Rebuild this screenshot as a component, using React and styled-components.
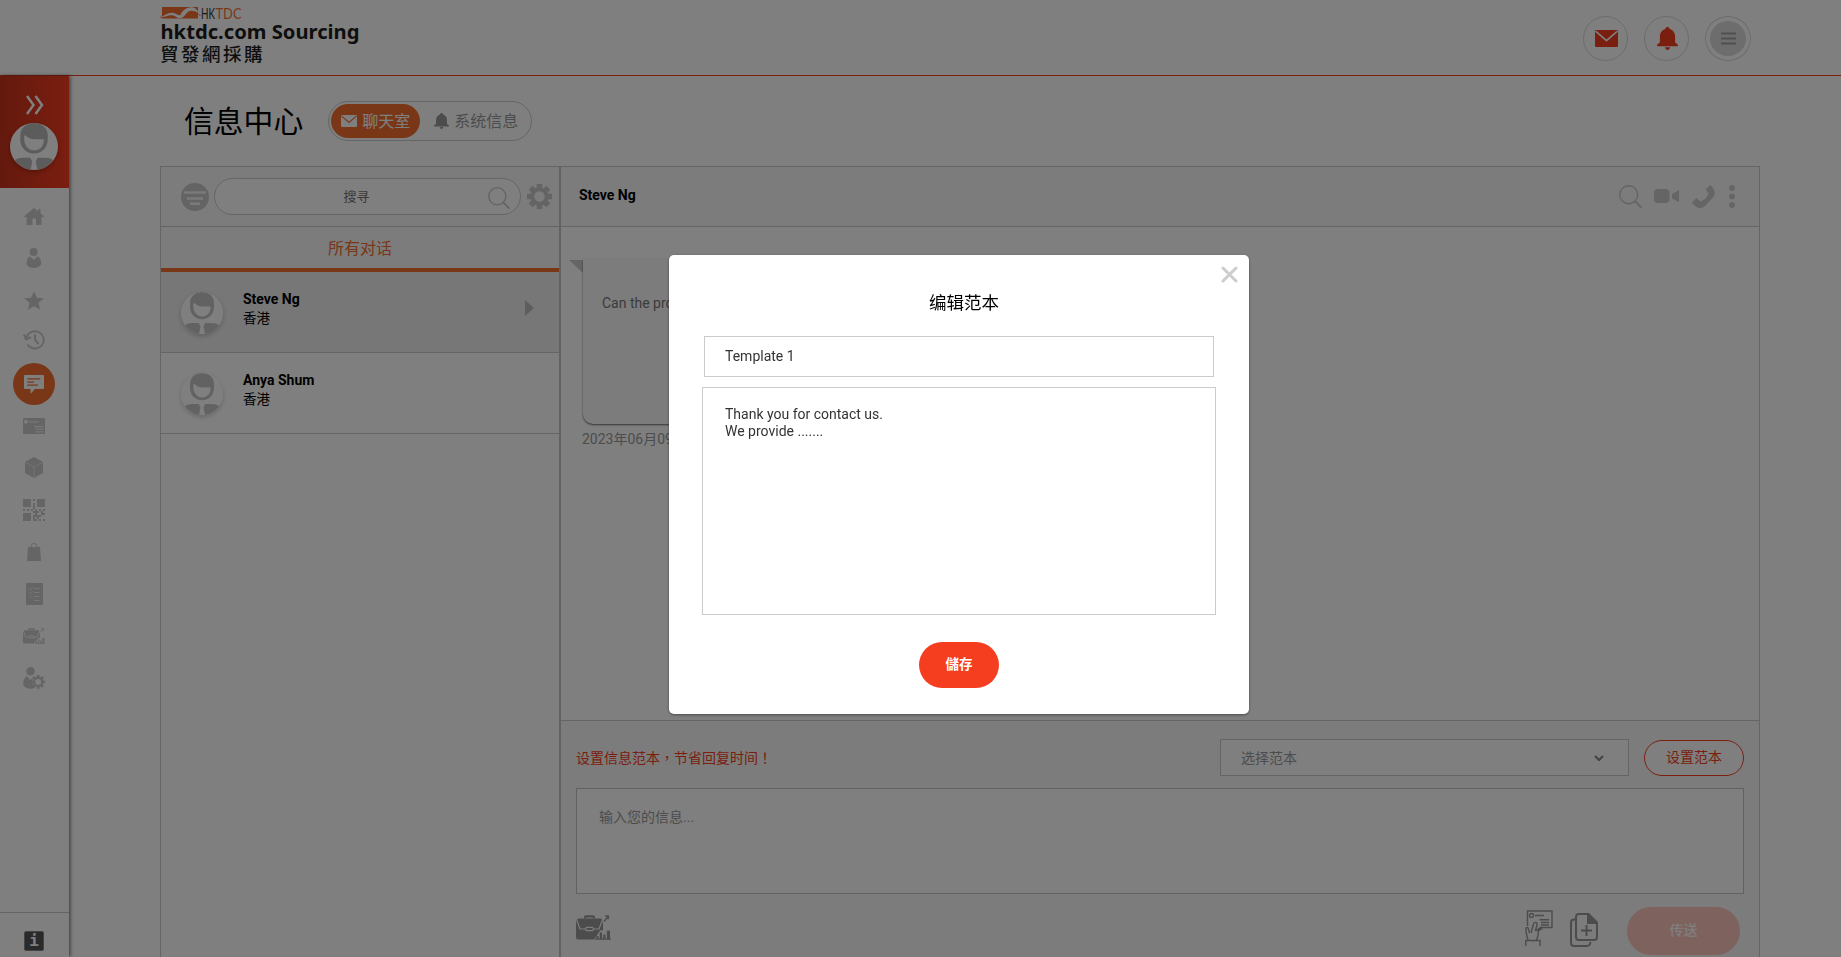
import React from 'react';
import styled, { createGlobalStyle } from 'styled-components';

const COLOR = {
  RED: '#f53d20',
  ORANGE: '#f26f31',
  BORDER: '#cbcbcb',
  ICON: '#cbcbcb',
  PANEL: '#f8f8f8',
  WHITE: '#fff',
};

const GlobalStyle = createGlobalStyle`
  * {
    box-sizing: border-box;
  }
  body {
    margin: 0;
    overflow: hidden;
    background: #fff;
    color: #000;
    font-family: Roboto, 'Noto Sans CJK SC', sans-serif;
    font-size: 14px;
  }
  svg {
    display: block;
    flex: none;
  }
  input, textarea, button {
    font-family: inherit;
    font-size: 14px;
  }
`;

const SearchIcon = ({ size = 22 }) => (
  <svg width={size} height={size} viewBox="0 0 22 22" fill="none" stroke="#c6c6c6">
    <circle cx="9.3" cy="9.3" r="8.6" strokeWidth="1.3" />
    <path d="M15.3 15.3L21.3 21.6" strokeWidth="1.8" />
  </svg>
);

const GearIcon = ({ size = 25, hole = 5.2 }) => (
  <svg width={size} height={size} viewBox="0 0 25 25" fill="none" stroke="currentColor">
    <circle cx="12.5" cy="12.5" r={hole + 2} strokeWidth="4" />
    {[0, 45, 90, 135].map((deg) => (
      <path
        key={deg}
        d="M12.5 0V4.4M12.5 20.6V25"
        strokeWidth="5.6"
        transform={`rotate(${deg} 12.5 12.5)`}
      />
    ))}
  </svg>
);

const EnvelopeIcon = ({ width, height, line }) => (
  <svg width={width} height={height} viewBox="0 0 23 17" preserveAspectRatio="none">
    <rect width="23" height="17" rx="1" fill="currentColor" />
    <path d="M0.6 1.2L11.5 10.6L22.4 1.2" fill="none" stroke={line} strokeWidth="1.6" />
  </svg>
);

const BellIcon = ({ width, height }) => (
  <svg width={width} height={height} viewBox="0 0 22 23" preserveAspectRatio="none" fill="currentColor">
    <path d="M11 0c1.4 0 2.2.8 2.3 2C17 3 19 6 19 9.500V15.600L21.400 17.200C22.300 18 22 19.300 20.800 19.300H1.200C0 19.300-.3 18 .6 17.200L3 15.600V9.500C3 6 5 3 8.700 2 8.800.8 9.600 0 11 0Z" />
    <path d="M8.300 20.300H13.700C13.200 22 12.300 23 11 23S8.800 22 8.300 20.300Z" />
  </svg>
);

const BriefcaseIcon = ({ width, height, line }) => (
  <svg width={width} height={height} viewBox="0 0 35 25" fill="currentColor">
    <path d="M8 3.500V2.300Q8 .3 10 .3H17Q19 .3 19 2.300V3.500H16.800V2.600H10.200V3.500Z" />
    <path d="M2 3.500H25.500L27 8V15L20 22 18 24.500H2Q0 24.500 0 22.500V6Z" />
    <path d="M.8 5L4 14H10M17 14H23L26.400 5" fill="none" stroke={line} strokeWidth="1.2" />
    <rect x="9.800" y="12.300" width="7.400" height="3.400" rx="1" fill="none" stroke={line} strokeWidth="1.2" />
    <path d="M18 25L24 15.500H36V25Z" fill={line} />
    <path d="M19 23.500H35V24.700H19ZM20.500 21H22.500V24H20.500ZM23.700 17.500H26V24H23.700ZM27.200 19.500H29.500V24H27.200ZM30.900 15.800H34V24H30.900Z" />
    <path d="M28 6.500L31.500 2.300M29 .900H32.300V4.300" fill="none" stroke="currentColor" strokeWidth="1.500" />
  </svg>
);

const AvatarIcon = ({ width = 42, height = 42, line = '#c5c5c5' }) => (
  <svg width={width} height={height} viewBox="0 0 42 42" preserveAspectRatio="none">
    <defs>
      <clipPath id="avatarClip">
        <circle cx="21" cy="21" r="21" />
      </clipPath>
    </defs>
    <g clipPath="url(#avatarClip)">
      <rect width="42" height="42" fill="#fff" />
      <path d="M21 0C28 0 33 4.500 33 11V15C33 22 28 27.300 21 27.300S9 22 9 15V11C9 4.500 14 0 21 0Z" fill={line} />
      <path d="M13.500 11C15.500 13.500 18.500 14.500 22 14.500H29.500C30 20 26.500 24.500 21 24.500C15.500 24.500 11.500 19 12.500 11.500Z" fill="#fff" />
      <path d="M4 33Q7 31 11 31H17.800L19.500 34.500 18 42H4ZM38 33Q35 31 31 31H24.200L22.500 34.500 24 42H38Z" fill={line} />
    </g>
  </svg>
);

const gray = { fill: COLOR.ICON };

const MENU_ITEMS = [
  {
    name: 'home',
    icon: (
      <svg width="20" height="17" viewBox="0 0 20 17" {...gray}>
        <path d="M10 0L14 3.200V1H16.500V5.200L20 8.300 19 9.300H17.500V17H12V10.500H8.500V17H2.700V9.300H1L0 8.300Z" />
      </svg>
    ),
  },
  {
    name: 'user',
    icon: (
      <svg width="16" height="20" viewBox="0 0 16 20" {...gray}>
        <circle cx="7.700" cy="4" r="4" />
        <path d="M3.600 8.300L7.800 11.800 12 8.300C14.500 10.500 15.500 13 15.200 16.500C13.500 19 11 20 8 20S1.800 19 .6 16.500C.3 13 1.300 10.500 3.600 8.300Z" />
      </svg>
    ),
  },
  {
    name: 'star',
    icon: (
      <svg width="20" height="19" viewBox="0 0 20 19" {...gray}>
        <path d="M10 0L12.800 6.700 20 7.300 14.500 11.800 16.200 18.800 10 15.200 3.800 18.800 5.500 11.800 0 7.300 7.200 6.700Z" />
      </svg>
    ),
  },
  {
    name: 'history',
    lift: 4,
    icon: (
      <svg width="22" height="20" viewBox="0 0 22 20" fill="none" stroke={COLOR.ICON}>
        <path d="M3.500 7.500A8.800 8.600 0 1 1 4.500 14.500" strokeWidth="1.900" />
        <path d="M1 4.500L3 9.300 8 7.300" strokeWidth="2.300" />
        <path d="M12 4.500V10L15.700 14" strokeWidth="2" />
      </svg>
    ),
  },
  {
    name: 'chat',
    active: true,
    icon: (
      <svg width="20" height="19" viewBox="0 0 20 19">
        <path d="M1 0H19Q20 0 20 1V13Q20 14 19 14H11L6.500 18.800V14H1Q0 14 0 13V1Q0 0 1 0Z" fill="#fff" />
        <path d="M3.300 3.900H16.300M3.300 7.100H10M3.300 10.200H14" stroke={COLOR.ORANGE} strokeWidth="1.200" />
      </svg>
    ),
  },
  {
    name: 'card',
    icon: (
      <svg width="22" height="16" viewBox="0 0 22 16">
        <rect width="22" height="16" rx="1" fill={COLOR.ICON} />
        <circle cx="3" cy="3.800" r="1.900" fill="#fff" />
        <path d="M6 3.800H16M11 8.600H20.500M12.500 11.200H20.500M12.500 13.800H20.500" stroke="#eee" strokeWidth="1.200" />
      </svg>
    ),
  },
  {
    name: 'box',
    lift: 1,
    icon: (
      <svg width="18" height="21" viewBox="0 0 18 21">
        <path d="M9 0L18 5V16L9 21 0 16V5Z" fill={COLOR.ICON} />
        <path d="M.5 5.300L9 10.200 17.500 5.300M9 10.200V20.500" fill="none" stroke="#eee" strokeWidth="0.800" />
      </svg>
    ),
  },
  {
    name: 'qrcode',
    icon: (
      <svg width="22" height="22" viewBox="0 0 22 22" {...gray}>
        <path d="M0 0H8V8H0ZM14 0H22V8H14ZM0 14H8V22H0Z" />
        <path d="M10 0H12V2H10ZM10 4H12V10H10ZM0 10H2V12H0ZM4 10H6V12H4ZM8 10H10V12H8ZM12 10H14V12H12ZM16 10H18V12H16ZM20 10H22V12H20ZM10 12H16V14H10ZM18 12H20V16H18ZM12 14H14V18H10V16H12ZM14 16H18V18H14ZM20 14H22V16H20ZM10 18H12V22H10ZM14 18H16V20H14ZM16 20H18V22H16ZM20 20H22V22H20ZM12 20H14V22H12Z" />
      </svg>
    ),
  },
  {
    name: 'bag',
    icon: (
      <svg width="14" height="18" viewBox="0 0 14 18">
        <path d="M1 4H13L14 18H0Z" fill={COLOR.ICON} />
        <path d="M4.300 5V3A2.700 2.600 0 0 1 9.700 3V5" fill="none" stroke={COLOR.ICON} strokeWidth="0.900" />
      </svg>
    ),
  },
  {
    name: 'list',
    icon: (
      <svg width="17" height="22" viewBox="0 0 17 22">
        <rect width="17" height="22" fill={COLOR.ICON} />
        <path
          d="M8 5.500H13.500M8 9.500H13.500M8 13.500H13.500M8 17.500H13.500M3 5.500L4.300 6.800 6.500 4M3 9.400L4.300 10.700 6.500 8M3 13.300L4.300 14.600 6.500 12"
          fill="none"
          stroke="#eee"
          strokeWidth="1"
        />
      </svg>
    ),
  },
  { name: 'business', icon: <BriefcaseIcon width={22} height={16} line="#fff" /> },
  {
    name: 'account',
    icon: (
      <svg width="22" height="22" viewBox="0 0 22 22" fill={COLOR.ICON}>
        <circle cx="7.500" cy="4.300" r="4.200" />
        <path d="M3.600 9L7.500 13 10.500 9.500 9 14 10 18 12 21C8 22.500 3 22 .6 18.500C-.3 15 1 11 3.600 9Z" />
        <g transform="translate(8.300 8) scale(.55)" fill="none" stroke={COLOR.ICON}>
          <circle cx="12.500" cy="12.500" r="7.300" strokeWidth="3.800" />
          {[0, 45, 90, 135].map((deg) => (
            <path key={deg} d="M12.500 0V4.400M12.500 20.600V25" strokeWidth="5" transform={`rotate(${deg} 12.500 12.500)`} />
          ))}
        </g>
      </svg>
    ),
  },
];

const CONTACTS = [
  { name: 'Steve Ng', place: '香港', selected: true },
  { name: 'Anya Shum', place: '香港', selected: false },
];

const Logo = () => (
  <svg width="206" height="75" viewBox="0 0 206 75">
    <rect x="2" y="7" width="36" height="11.500" fill={COLOR.ORANGE} />
    <path d="M-1 16.500L2 17.300M38 13.500L40.500 16" stroke={COLOR.ORANGE} />
    <path d="M0 16.500C4 16.800 7 12.800 12 12.800C15 12.800 17 15 20 15.500C22 11 26 7.200 31 7.200C35 7.200 37.500 9.500 38.500 13C36 11.500 34 10.800 31 10.800C26 10.800 25 18.500 20 18.200C16 18 15 15 11 15.300C7 15.500 5 17.500 0 17Z" fill="#fff" />
    <text x="41" y="18.500" fill="#333" fontFamily="Lato, sans-serif" fontSize="16" textLength="14" lengthAdjust="spacingAndGlyphs">
      HK
    </text>
    <text x="55.500" y="18.500" fill={COLOR.ORANGE} fontFamily="Lato, sans-serif" fontSize="16" textLength="26" lengthAdjust="spacingAndGlyphs">
      TDC
    </text>
    <text x="0.500" y="38.500" fill="#1c1c1c" fontFamily="'Noto Sans', sans-serif" fontWeight="700" fontSize="19.500" textLength="199" lengthAdjust="spacingAndGlyphs">
      hktdc.com Sourcing
    </text>
    <text x="0" y="60.500" fill="#1c1c1c" fontFamily="'Noto Sans CJK TC', sans-serif" fontWeight="500" fontSize="18.500" letterSpacing="2.500">
      貿發網採購
    </text>
  </svg>
);

const TemplateModal = () => (
  <Overlay>
    <Modal>
      <CloseButton aria-label="close">
        <svg width="17" height="17" viewBox="0 0 17 17" fill="none" stroke="#cdcdcd" strokeWidth="3" strokeLinecap="round">
          <path d="M2 2L15 15M15 2L2 15" />
        </svg>
      </CloseButton>
      <ModalTitle>编辑范本</ModalTitle>
      <TemplateName defaultValue="Template 1" />
      <TemplateBody spellCheck={false} defaultValue={'Thank you for contact us.\nWe provide .......'} />
      <SaveButton>儲存</SaveButton>
    </Modal>
  </Overlay>
);

const App = () => {
  return (
    <>
      <GlobalStyle />
      <Page>
        <Header>
          <Logo />
          <HeaderActions>
            <RoundButton>
              <EnvelopeIcon width={23} height={17} line="#fff" />
            </RoundButton>
            <RoundButton>
              <BellIcon width={21} height={23} />
            </RoundButton>
            <RoundButton $wide>
              <MenuCircle>
                <svg width="15" height="13" viewBox="0 0 15 13" stroke="#a0a0a0" strokeWidth="1.800">
                  <path d="M0 1.500H15M0 6.500H15M0 11.500H15" />
                </svg>
              </MenuCircle>
            </RoundButton>
          </HeaderActions>
        </Header>
        <Body>
          <SideBar>
            <Profile>
              <svg width="18" height="20" viewBox="0 0 18 20" fill="none" stroke="#fff" strokeWidth="2.500">
                <path d="M1 1L7.500 10 1 19M9.500 1L16 10 9.500 19" />
              </svg>
              <ProfilePhoto>
                <AvatarIcon width={48} height={47} line="#b9b9b9" />
              </ProfilePhoto>
            </Profile>
            <MenuList>
              {MENU_ITEMS.map(({ name, icon, active, lift = 0 }) => (
                <MenuItem key={name} $active={active} $lift={lift}>
                  {icon}
                </MenuItem>
              ))}
            </MenuList>
            <SideFooter>
              <InfoBadge>i</InfoBadge>
            </SideFooter>
          </SideBar>
          <Content>
            <TitleRow>
              <Title>信息中心</Title>
              <Switch>
                <SwitchItem $active>
                  <EnvelopeIcon width={16} height={12} line={COLOR.ORANGE} />
                  聊天室
                </SwitchItem>
                <SwitchItem>
                  <BellIcon width={15} height={16} />
                  系统信息
                </SwitchItem>
              </Switch>
            </TitleRow>
            <Messenger>
              <ContactPanel>
                <SearchRow>
                  <svg width="28" height="28" viewBox="0 0 28 28">
                    <circle cx="14" cy="14" r="14" fill="#c8c8c8" />
                    <path d="M3 9.500H25M5.800 15.500H22M9 20.700H19" stroke="#f4f4f4" strokeWidth="2.500" />
                  </svg>
                  <SearchBox>
                    <SearchText>搜寻</SearchText>
                    <SearchIcon />
                  </SearchBox>
                  <Gear>
                    <GearIcon />
                  </Gear>
                </SearchRow>
                <Tab>所有对话</Tab>
                {CONTACTS.map(({ name, place, selected }) => (
                  <Contact key={name} $selected={selected}>
                    <Photo>
                      <AvatarIcon />
                    </Photo>
                    <ContactText>
                      <Name>{name}</Name>
                      <Place>{place}</Place>
                    </ContactText>
                    {selected && (
                      <Arrow width="9" height="16" viewBox="0 0 9 16">
                        <path d="M0 0L9 8L0 16Z" />
                      </Arrow>
                    )}
                  </Contact>
                ))}
              </ContactPanel>
              <ChatPanel>
                <ChatHeader>
                  <Name>Steve Ng</Name>
                  <ChatTools>
                    <SearchIcon size={23} />
                    <svg width="26" height="14" viewBox="0 0 26 14" {...gray}>
                      <rect width="15.500" height="14" rx="4" />
                      <path d="M18 5L25 1V13L18 9.500Z" />
                    </svg>
                    <svg width="23" height="23" viewBox="0 0 23 23" {...gray}>
                      <path d="M18.300 0L13.500 4.500 16.500 8.500C15.500 12 12 15.500 8.300 16.500L4.500 13 0 17.500C2 21 5 23 8.500 23C11 22.800 12 22 13.500 20.500L21 12.500C24 9 23 4 18.300 0Z" />
                    </svg>
                    <svg width="6" height="23" viewBox="0 0 6 23" {...gray}>
                      <circle cx="3" cy="3" r="3" />
                      <circle cx="3" cy="11.500" r="3" />
                      <circle cx="3" cy="20" r="3" />
                    </svg>
                  </ChatTools>
                </ChatHeader>
                <Conversation>
                  <BubbleRow>
                    <svg width="14" height="13" viewBox="0 0 14 13" fill="#cbcbcb">
                      <path d="M0 0H14V13Z" />
                    </svg>
                    <Bubble>Can the product</Bubble>
                  </BubbleRow>
                  <SentDate>2023年06月09</SentDate>
                </Conversation>
                <Composer>
                  <TemplateRow>
                    <Hint>设置信息范本，节省回复时间！</Hint>
                    <Select>
                      选择范本
                      <svg width="10" height="7" viewBox="0 0 10 7" fill="none" stroke="#888" strokeWidth="2.200">
                        <path d="M1 1L5 5L9 1" />
                      </svg>
                    </Select>
                    <OutlineButton>设置范本</OutlineButton>
                  </TemplateRow>
                  <MessageInput placeholder="输入您的信息..." />
                  <SendRow>
                    <Attach>
                      <BriefcaseIcon width={35} height={25} line={COLOR.PANEL} />
                    </Attach>
                    <svg width="28" height="36" viewBox="0 0 28 36" fill="none" stroke="#999" strokeWidth="1.400">
                      <path d="M2.500 16V1H27V17.500H15" />
                      <circle cx="6.500" cy="5.500" r="2" />
                      <path d="M10 5.500H19M14.500 9.800H24M16 12.500H24M16 15H24" />
                      <path d="M3 30C1.800 26 .8 22 1 18.500C1 17 3 17 3.300 18.500L4.500 23M6 23L8.500 14C9.500 11.500 12.500 12 12 15L10.500 20.500L13.500 20C13.500 24 13 27 11.500 30" />
                      <path d="M.8 36V30.500H15V36" />
                      <path d="M13 20L17 17.800" strokeWidth="3" />
                    </svg>
                    <svg width="28" height="34" viewBox="0 0 28 34" fill="none" stroke="#999" strokeWidth="2">
                      <path d="M5.500 6.500H4Q1 6.500 1 9.500V30Q1 33 4 33H17Q20 33 20.500 29" />
                      <path d="M9 1H18.500L27 9.500V24Q27 27 24 27H9Q6 27 6 24V4Q6 1 9 1Z" />
                      <path d="M17 1H19L27 9.500V11H17Z" fill="#999" stroke="none" />
                      <path d="M16.500 12V23M11 17.500H22" />
                    </svg>
                    <SendButton>传送</SendButton>
                  </SendRow>
                </Composer>
              </ChatPanel>
            </Messenger>
          </Content>
        </Body>
      </Page>
      <TemplateModal />
    </>
  );
};

const Page = styled.div`
  display: flex;
  flex-direction: column;
  height: 957px;
  overflow: hidden;
`;
const Header = styled.header`
  display: flex;
  flex: none;
  justify-content: space-between;
  height: 76px;
  padding: 0 90px 0 160px;
  border-bottom: 1px solid ${COLOR.RED};
`;
const HeaderActions = styled.div`
  display: flex;
  gap: 16px;
  padding-top: 16px;
  color: ${COLOR.RED};
`;
const RoundButton = styled.div`
  display: flex;
  align-items: center;
  justify-content: center;
  width: ${({ $wide }) => ($wide ? 46 : 45)}px;
  height: 45px;
  padding-left: ${({ $wide }) => ($wide ? 0 : 2)}px;
  border: 1px solid #d8d8d8;
  border-radius: 50%;
`;
const MenuCircle = styled.div`
  display: flex;
  align-items: center;
  justify-content: center;
  width: 36px;
  height: 35px;
  border-radius: 50%;
  background: #dadada;
`;
const Body = styled.div`
  display: flex;
  flex: 1;
  min-height: 0;
`;
const SideBar = styled.nav`
  display: flex;
  flex: none;
  flex-direction: column;
  width: 69px;
  box-shadow: 1px 0 4px rgba(0, 0, 0, 0.6);
`;
const Profile = styled.div`
  display: flex;
  flex: none;
  flex-direction: column;
  align-items: center;
  gap: 8px;
  height: 112px;
  padding-top: 19px;
  background: linear-gradient(90deg, #c9331c, #f53d20);
`;
const ProfilePhoto = styled.div`
  margin-right: 1px;
  border-radius: 50%;
  box-shadow: 0 2px 5px rgba(0, 0, 0, 0.25);
`;
const MenuList = styled.div`
  display: flex;
  flex: 1;
  flex-direction: column;
  align-items: center;
  padding: 7px 1px 0 0;
  color: ${COLOR.ICON};
`;
const MenuItem = styled.div`
  display: flex;
  align-items: center;
  justify-content: center;
  width: 42px;
  height: 42px;
  padding-bottom: ${({ $lift }) => $lift}px;
  border-radius: 50%;
  background: ${({ $active }) => ($active ? COLOR.ORANGE : 'transparent')};
`;
const SideFooter = styled.div`
  display: flex;
  justify-content: center;
  height: 45px;
  padding: 18px 1px 0 0;
  border-top: 1px solid ${COLOR.BORDER};
`;
const InfoBadge = styled.div`
  width: 20px;
  height: 20px;
  border: 1px solid #888;
  border-radius: 2px;
  background: #555;
  color: #fff;
  font: 700 16px/18px 'DejaVu Sans Mono', monospace;
  text-align: center;
`;
const Content = styled.main`
  display: flex;
  flex: 1;
  flex-direction: column;
  padding: 0 81px 0 91px;
`;
const TitleRow = styled.div`
  display: flex;
  flex: none;
  align-items: center;
  gap: 25px;
  height: 90px;
  padding-left: 24px;
`;
const Title = styled.h1`
  margin: 0;
  padding-top: 2px;
  font-size: 29.8px;
  font-weight: 400;
  line-height: 40px;
`;
const Switch = styled.div`
  display: flex;
  width: 204px;
  height: 40px;
  padding: 2px;
  border: 1px solid ${COLOR.BORDER};
  border-radius: 20px;
`;
const SwitchItem = styled.div`
  display: flex;
  align-items: center;
  gap: 5px;
  height: 34px;
  padding: ${({ $active }) => ($active ? '0 10px 2px' : '0 14px 2px')};
  border-radius: 17px;
  background: ${({ $active }) => ($active ? COLOR.ORANGE : 'transparent')};
  color: ${({ $active }) => ($active ? COLOR.WHITE : '#999')};
  font-size: 16px;
  white-space: nowrap;

  svg {
    margin-top: 2px;
  }
`;
const Messenger = styled.section`
  display: flex;
  flex: 1;
  min-height: 0;
  border: 1px solid ${COLOR.BORDER};
  border-bottom: 0;
`;
const ContactPanel = styled.div`
  flex: none;
  width: 400px;
  border-right: 2px solid #c4c4c4;
`;
const SearchRow = styled.div`
  display: flex;
  align-items: center;
  height: 60px;
  padding-left: 20px;
  border-bottom: 1px solid ${COLOR.BORDER};
  background: ${COLOR.PANEL};
`;
const SearchBox = styled.div`
  display: flex;
  align-items: center;
  width: 307px;
  height: 37px;
  margin: 0 6px 0 5px;
  padding: 2px 10px 0 0;
  border: 1px solid ${COLOR.BORDER};
  border-radius: 19px;
  background: ${COLOR.WHITE};
`;
const SearchText = styled.div`
  flex: 1;
  padding: 0 0 4px 10px;
  color: #757575;
  font-size: 13px;
  text-align: center;
`;
const Gear = styled.div`
  color: #c8c8c8;
`;
const Tab = styled.div`
  height: 45px;
  border-bottom: 4px solid ${COLOR.ORANGE};
  background: ${COLOR.PANEL};
  color: ${COLOR.ORANGE};
  font-size: 16px;
  line-height: 43px;
  text-align: center;
`;
const Contact = styled.div`
  display: flex;
  align-items: center;
  height: 81px;
  padding: 0 25px 0 20px;
  border-bottom: 1px solid ${COLOR.BORDER};
  background: ${({ $selected }) => ($selected ? '#eee' : COLOR.WHITE)};
`;
const Photo = styled.div`
  margin-top: 2px;
  border-radius: 50%;
  box-shadow: 0 2px 5px rgba(0, 0, 0, 0.2);
`;
const ContactText = styled.div`
  flex: 1;
  padding: 0 0 7px 20px;
`;
const Arrow = styled.svg`
  margin-bottom: 8px;
  fill: #bdbdbd;
`;
const Name = styled.div`
  font-size: 14px;
  font-weight: 700;
  line-height: 19px;
`;
const Place = styled.div`
  font-size: 13.5px;
  line-height: 19px;
`;
const ChatPanel = styled.div`
  display: flex;
  flex: 1;
  flex-direction: column;
`;
const ChatHeader = styled.div`
  display: flex;
  align-items: center;
  justify-content: space-between;
  height: 60px;
  padding: 0 24px 2px 18px;
  border-bottom: 1px solid ${COLOR.BORDER};
  background: ${COLOR.PANEL};
`;
const ChatTools = styled.div`
  display: flex;
  align-items: center;
  gap: 12px;
  padding-top: 1px;

  svg:last-child {
    margin-left: 2px;
  }
`;
const Conversation = styled.div`
  height: 493px;
  padding: 32px 8px 0;
`;
const BubbleRow = styled.div`
  display: flex;

  svg {
    margin-top: 1px;
  }
`;
const Bubble = styled.div`
  width: 400px;
  height: 165px;
  padding: 35px 19px;
  border-radius: 0 0 10px 10px;
  background: ${COLOR.PANEL};
  box-shadow: 0 1px 2px rgba(0, 0, 0, 0.6);
  color: #777;
  line-height: 18px;
`;
const SentDate = styled.div`
  padding: 5px 13px;
  color: #999;
  line-height: 20px;
`;
const Composer = styled.div`
  flex: 1;
  padding: 18px 15px 0;
  border-top: 1px solid ${COLOR.BORDER};
  background: ${COLOR.PANEL};
`;
const TemplateRow = styled.div`
  display: flex;
  align-items: center;
  height: 37px;
`;
const Hint = styled.div`
  flex: 1;
  padding-bottom: 2px;
  color: ${COLOR.RED};
  font-family: Roboto, 'Noto Sans CJK TC', sans-serif;
`;
const Select = styled.div`
  display: flex;
  align-items: center;
  justify-content: space-between;
  width: 409px;
  height: 37px;
  margin-right: 15px;
  padding: 0 24px 2px 20px;
  border: 1px solid ${COLOR.BORDER};
  background: ${COLOR.WHITE};
  color: #999;

  svg {
    margin-top: 4px;
  }
`;
const OutlineButton = styled.button`
  width: 100px;
  height: 36px;
  margin-top: 1px;
  padding: 0 0 4px;
  border: 1px solid ${COLOR.RED};
  border-radius: 18px;
  background: ${COLOR.WHITE};
  color: ${COLOR.RED};
  font-weight: 400;
`;
const MessageInput = styled.textarea`
  display: block;
  width: 1168px;
  height: 106px;
  margin-top: 12px;
  padding: 18px 22px;
  border: 1px solid #c4c4c4;
  background: ${COLOR.WHITE};
  line-height: 20px;
  resize: none;

  &::placeholder {
    color: #999;
  }
`;
const SendRow = styled.div`
  display: flex;
  align-items: center;
  height: 49px;
  margin-top: 12px;
  padding-right: 4px;
  gap: 17px;

  svg:nth-child(2) {
    margin-bottom: 5px;
  }
  svg:nth-child(3) {
    margin-bottom: 2px;
  }
`;
const Attach = styled.div`
  flex: 1;
  padding-bottom: 6px;
  color: #999;
`;
const SendButton = styled.button`
  width: 113px;
  height: 48px;
  margin-left: 12px;
  padding: 0 0 3px;
  border: 0;
  border-radius: 24px;
  background: #fcc4ba;
  color: ${COLOR.WHITE};
  font-weight: 500;
`;
const Overlay = styled.div`
  position: fixed;
  inset: 0;
  display: flex;
  justify-content: center;
  align-items: flex-start;
  padding: 255px 0 0 77px;
  background: rgba(0, 0, 0, 0.5);
`;
const Modal = styled.div`
  position: relative;
  display: flex;
  flex-direction: column;
  align-items: center;
  width: 580px;
  height: 459px;
  border-radius: 5px;
  background: ${COLOR.WHITE};
  box-shadow: 0 1px 3px rgba(0, 0, 0, 0.4);
`;
const CloseButton = styled.button`
  position: absolute;
  top: 11px;
  right: 11px;
  padding: 0;
  border: 0;
  background: none;
`;
const ModalTitle = styled.h2`
  margin: 35px 0 20px;
  padding-left: 10px;
  font-size: 17.5px;
  font-weight: 400;
  line-height: 26px;
`;
const TemplateName = styled.input`
  width: 510px;
  height: 41px;
  padding: 0 20px 2px;
  border: 1px solid ${COLOR.BORDER};
  color: #333;
`;
const TemplateBody = styled.textarea`
  width: 514px;
  height: 228px;
  margin-top: 10px;
  padding: 18px 22px;
  border: 1px solid ${COLOR.BORDER};
  color: #333;
  line-height: 17px;
  resize: none;
`;
const SaveButton = styled.button`
  width: 80px;
  height: 46px;
  margin-top: 27px;
  padding: 0 0 4px;
  border: 0;
  border-radius: 23px;
  background: ${COLOR.RED};
  color: ${COLOR.WHITE};
  font-family: Roboto, 'Noto Sans CJK TC', sans-serif;
  font-size: 13.5px;
  font-weight: 700;
`;

export default App;
